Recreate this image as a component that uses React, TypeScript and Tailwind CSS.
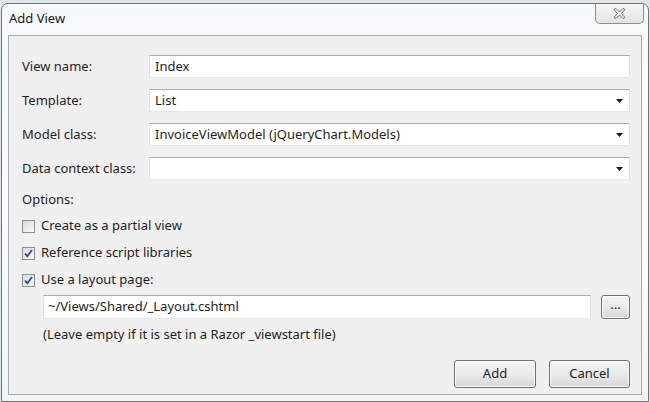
import React from "react";

const font = { fontFamily: '"Noto Sans", "Open Sans", sans-serif' };

function Field({ label, value, dropdown }: { label: string; value?: string; dropdown?: boolean }) {
  return (
    <div className="flex h-[23px] items-center">
      <div className="w-[127px] text-[13px] text-[#1e1e1e]">{label}</div>
      <div className="flex h-full flex-1 items-center border border-t-[#abadb3] border-x-[#e2e3ea] border-b-[#e3e9ef] bg-white pl-[5px] pr-[6px] text-[13px] text-[#1e1e1e]">
        <span className="flex-1">{value}</span>
        {dropdown && (
          <svg width="7" height="4" viewBox="0 0 7 4">
            <path d="M0 0h7L3.5 4z" fill="#1a1a1a" />
          </svg>
        )}
      </div>
    </div>
  );
}

function Check({ label, checked }: { label: string; checked?: boolean }) {
  return (
    <div className="flex h-[27px] items-center gap-[6px]">
      <div className="flex h-[13px] w-[13px] items-center justify-center border border-[#8e8f8f] bg-gradient-to-br from-[#dcdcdc] to-[#f8f8f8]">
        {checked && (
          <svg width="9" height="9" viewBox="0 0 9 9">
            <path d="M1 4.5l2.3 2.7L8 1" stroke="#2a4f84" strokeWidth="1.8" fill="none" />
          </svg>
        )}
      </div>
      <span className="text-[13px] text-[#1e1e1e]">{label}</span>
    </div>
  );
}

function Btn({ children, className }: { children: React.ReactNode; className: string }) {
  return (
    <div
      className={`flex items-center justify-center rounded-[3px] border border-[#707070] bg-gradient-to-b from-[#f4f4f4] via-[#ebebeb] to-[#d6d6d6] text-[13px] text-[#1e1e1e] shadow-[inset_0_0_0_1px_#fcfcfc] ${className}`}
    >
      {children}
    </div>
  );
}

export default function App() {
  return (
    <div className="h-[402px] w-[650px] overflow-hidden bg-[#dfe6ea]" style={font}>
      <div className="ml-[1px] mt-[3px] flex h-[399px] w-[648px] flex-col rounded-t-[7px] border border-[#6f7377] bg-gradient-to-b from-[#f6f8fa] via-[#ffffff] to-[#f2f4f6]">
        <div className="flex h-[31px] items-start justify-between">
          <div className="pl-[7px] pt-[5px] text-[13px] text-[#1a1a1a]">Add View</div>
          <div className="mr-[4px] flex h-[20px] w-[49px] items-center justify-center rounded-b-[5px] border border-t-0 border-[#8a8e92] bg-gradient-to-b from-[#f6f6f6] to-[#e4e4e4]">
            <svg width="13" height="11" viewBox="0 0 13 11">
              <path
                d="M1 1.5L4.5 5.5L1 9.5L3 10.5L6.5 7L10 10.5L12 9.5L8.5 5.5L12 1.5L10 0.5L6.5 4L3 0.5Z"
                fill="#f4f4f4"
                stroke="#6d6d6d"
                strokeWidth="1"
              />
            </svg>
          </div>
        </div>
        <div className="mx-[6px] flex h-[360px] flex-col border border-[#a6a9ad] bg-[#f0f0f0] pl-[13px] pr-[11px]">
          <div className="mt-[19px] flex flex-col gap-[11px]">
            <Field label="View name:" value="Index" />
            <Field label="Template:" value="List" dropdown />
            <Field label="Model class:" value="InvoiceViewModel (jQueryChart.Models)" dropdown />
            <Field label="Data context class:" dropdown />
          </div>
          <div className="mt-[10px] text-[13px] text-[#1e1e1e]">Options:</div>
          <div className="mt-[3px] flex flex-col">
            <Check label="Create as a partial view" />
            <Check label="Reference script libraries" checked />
            <Check label="Use a layout page:" checked />
          </div>
          <div className="ml-[21px] mt-[1px] flex items-center gap-[10px]">
            <div className="flex h-[24px] flex-1 items-center border border-t-[#abadb3] border-x-[#e2e3ea] border-b-[#e3e9ef] bg-white pl-[4px] text-[13px] text-[#1e1e1e]">
              ~/Views/Shared/_Layout.cshtml
            </div>
            <Btn className="h-[24px] w-[29px] pb-[4px]">...</Btn>
          </div>
          <div className="ml-[21px] mt-[6px] text-[13px] text-[#1e1e1e]">
            (Leave empty if it is set in a Razor _viewstart file)
          </div>
          <div className="mt-[16px] flex justify-end gap-[13px]">
            <Btn className="h-[28px] w-[82px]">Add</Btn>
            <Btn className="h-[28px] w-[81px]">Cancel</Btn>
          </div>
        </div>
      </div>
    </div>
  );
}
